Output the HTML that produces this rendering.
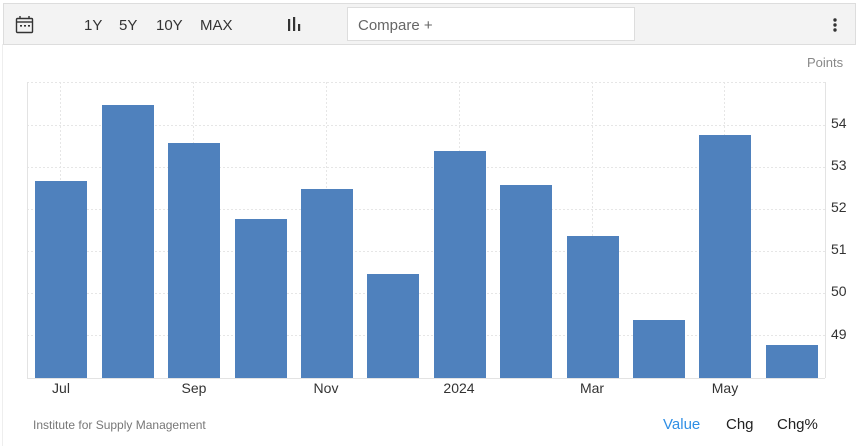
<!DOCTYPE html><html><head><style>
body{margin:0;width:858px;height:446px;background:#fff;font-family:"Liberation Sans",sans-serif;position:relative;overflow:hidden}
.a{position:absolute}
.tb{left:3px;top:3px;width:851px;height:40px;background:#f3f3f3;border:1px solid #ddd}
.t{font-size:15px;color:#333}
.yl{font-size:14px;color:#333;left:831px}
.xl{font-size:14px;color:#333;top:380px;width:60px;text-align:center}
</style></head><body>
<div class="a" style="left:2px;top:44px;width:1px;height:402px;background:#eee"></div>
<div class="a tb"></div>
<svg class="a" style="left:15px;top:15px" width="20" height="20" viewBox="0 0 20 20"><rect x="1.5" y="3.5" width="16" height="14" rx="1" fill="none" stroke="#333" stroke-width="1.4"/><line x1="1.5" y1="7" x2="17.5" y2="7" stroke="#333" stroke-width="1.4"/><line x1="5" y1="1" x2="5" y2="4" stroke="#333" stroke-width="1.4"/><line x1="14" y1="1" x2="14" y2="4" stroke="#333" stroke-width="1.4"/><rect x="5" y="10" width="2" height="1.6" fill="#333"/><rect x="9" y="10" width="2" height="1.6" fill="#333"/><rect x="13" y="10" width="2" height="1.6" fill="#333"/></svg>
<div class="a t" style="left:84px;top:17px">1Y</div>
<div class="a t" style="left:119px;top:17px">5Y</div>
<div class="a t" style="left:156px;top:17px">10Y</div>
<div class="a t" style="left:200px;top:17px">MAX</div>
<svg class="a" style="left:287px;top:17px" width="16" height="16"><rect x="1" y="2" width="2.2" height="12" fill="#333"/><rect x="6" y="0" width="2.2" height="14" fill="#333"/><rect x="11" y="7" width="2.2" height="7" fill="#333"/></svg>
<div class="a" style="left:347px;top:7px;width:286px;height:32px;background:#fff;border:1px solid #ddd"></div>
<div class="a" style="left:358px;top:17px;font-size:15px;color:#666">Compare +</div>
<svg class="a" style="left:832px;top:17px" width="6" height="16"><circle cx="3" cy="3" r="1.7" fill="#333"/><circle cx="3" cy="8" r="1.7" fill="#333"/><circle cx="3" cy="13" r="1.7" fill="#333"/></svg>
<div class="a" style="left:807px;top:55px;font-size:13px;color:#888">Points</div>
<svg class="a" style="left:0;top:0" width="858" height="446">
<g stroke="#e6e6e6" stroke-dasharray="2,2" stroke-width="1">
<line x1="27" y1="82.5" x2="825" y2="82.5"/><line x1="27" y1="125.5" x2="825" y2="125.5"/><line x1="27" y1="167.5" x2="825" y2="167.5"/><line x1="27" y1="209.5" x2="825" y2="209.5"/><line x1="27" y1="251.5" x2="825" y2="251.5"/><line x1="27" y1="293.5" x2="825" y2="293.5"/><line x1="27" y1="335.5" x2="825" y2="335.5"/>
<line x1="60.5" y1="82" x2="60.5" y2="378"/><line x1="193.5" y1="82" x2="193.5" y2="378"/><line x1="326.5" y1="82" x2="326.5" y2="378"/><line x1="459.5" y1="82" x2="459.5" y2="378"/><line x1="592.5" y1="82" x2="592.5" y2="378"/><line x1="724.5" y1="82" x2="724.5" y2="378"/>
</g>
<line x1="27.5" y1="82" x2="27.5" y2="378" stroke="#e3e3e3"/>
<line x1="825.5" y1="82" x2="825.5" y2="378" stroke="#e3e3e3"/>
<line x1="27" y1="378.5" x2="825" y2="378.5" stroke="#e3e3e3"/>
<g fill="#4f81bd">
<rect x="35" y="181" width="52" height="197"/><rect x="102" y="105" width="52" height="273"/><rect x="168" y="143" width="52" height="235"/><rect x="235" y="219" width="52" height="159"/><rect x="301" y="189" width="52" height="189"/><rect x="367" y="274" width="52" height="104"/><rect x="434" y="151" width="52" height="227"/><rect x="500" y="185" width="52" height="193"/><rect x="567" y="236" width="52" height="142"/><rect x="633" y="320" width="52" height="58"/><rect x="699" y="135" width="52" height="243"/><rect x="766" y="345" width="52" height="33"/>
</g></svg>
<div class="a yl" style="top:115px">54</div>
<div class="a yl" style="top:157px">53</div>
<div class="a yl" style="top:199px">52</div>
<div class="a yl" style="top:241px">51</div>
<div class="a yl" style="top:283px">50</div>
<div class="a yl" style="top:326px">49</div>
<div class="a xl" style="left:31px">Jul</div>
<div class="a xl" style="left:164px">Sep</div>
<div class="a xl" style="left:296px">Nov</div>
<div class="a xl" style="left:429px">2024</div>
<div class="a xl" style="left:562px">Mar</div>
<div class="a xl" style="left:695px">May</div>
<div class="a" style="left:33px;top:418px;font-size:12px;color:#777">Institute for Supply Management</div>
<div class="a" style="left:663px;top:416px;font-size:15px;color:#2f8fe5">Value</div>
<div class="a" style="left:726px;top:416px;font-size:15px;color:#222">Chg</div>
<div class="a" style="left:777px;top:416px;font-size:15px;color:#222">Chg%</div>
</body></html>
